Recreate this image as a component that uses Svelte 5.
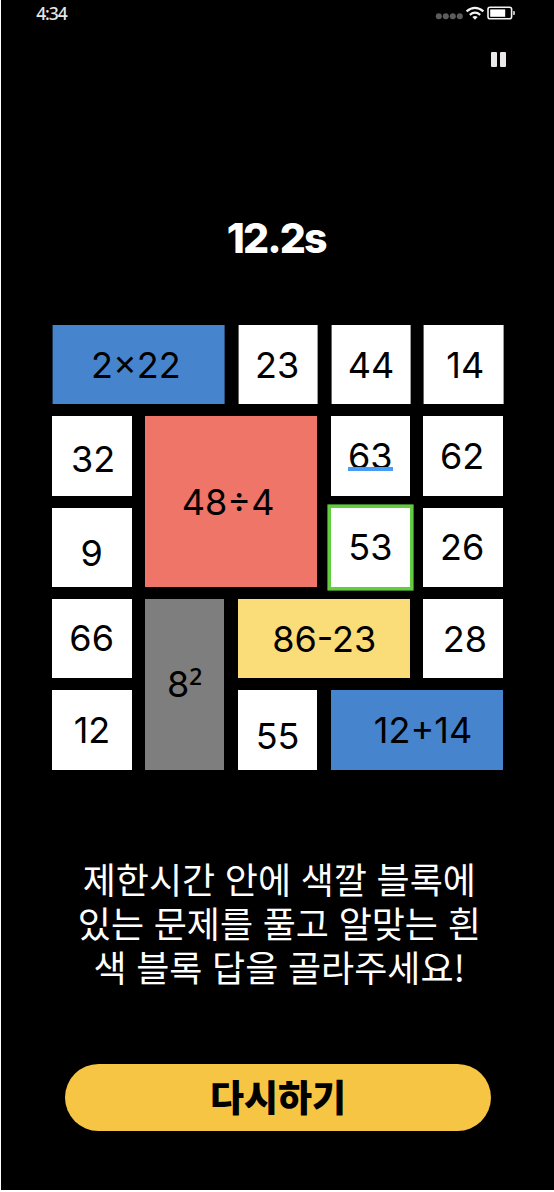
<script>
  const tiles = [
    { text: '2×22', color: 'blue', col: '1 / span 2', row: '1', dx: -3, dy: 0.4 },
    { text: '23', col: '3', row: '1', dx: -1, dy: 0.4 },
    { text: '44', col: '4', row: '1', dx: 0, dy: 0.4 },
    { text: '14', col: '5', row: '1', dx: 1.5, dy: 0.4 },
    { text: '32', col: '1', row: '2', dx: 1.2, dy: 3.3 },
    { text: '48÷4', color: 'red', col: '2 / span 2', row: '2 / span 2', dx: -3, dy: 0 },
    { text: '63', col: '4', row: '2', dx: 0, dy: 0, underlined: true },
    { text: '62', col: '5', row: '2', dx: -1, dy: 0 },
    { text: '9', col: '1', row: '3', dx: -0.2, dy: 5.8 },
    { text: '53', col: '4', row: '3', dx: 0, dy: 0, selected: true },
    { text: '26', col: '5', row: '3', dx: -1, dy: 0.4 },
    { text: '66', col: '1', row: '4', dx: -0.3, dy: -0.8 },
    { text: '8', power: '²', color: 'gray', col: '2', row: '4 / span 2', dx: 0, dy: 0 },
    { text: '86-23', color: 'yellow', col: '3 / span 2', row: '4', dx: 0.3, dy: 0 },
    { text: '28', col: '5', row: '4', dx: 1.7, dy: 0.2 },
    { text: '12', col: '1', row: '5', dx: 0, dy: -0.5 },
    { text: '55', col: '3', row: '5', dx: 0, dy: 5.8 },
    { text: '12+14', color: 'blue', col: '4 / span 2', row: '5', dx: 6.3, dy: 0 }
  ];
  const guide = '제한시간 안에 색깔 블록에\n있는 문제를 풀고 알맞는 흰\n색 블록 답을 골라주세요!';
</script>

<main class="screen">
  <header class="status">
    <span class="time">4:34</span>
    <svg class="indicators" width="82" height="16" viewBox="0 0 82 16">
      <g fill="#5c5c5c">
        <circle cx="3.8" cy="11.3" r="3" />
        <circle cx="10.8" cy="11.3" r="3" />
        <circle cx="17.8" cy="11.3" r="3" />
        <circle cx="24.8" cy="11.3" r="3" />
      </g>
      <g fill="none" stroke="#f4f4f4" stroke-width="2.1">
        <path d="M31.6 6.4Q40 -0.6 48.4 6.4" />
        <path d="M34.8 9.9Q40 5.5 45.2 9.9" />
      </g>
      <path d="M37.3 12.1Q40 10 42.7 12.1L40 14.8Z" fill="#f4f4f4" />
      <rect x="53" y="2.2" width="23.6" height="11.6" rx="2" fill="none" stroke="#f4f4f4" stroke-width="1.6" />
      <rect x="55.2" y="4.4" width="15" height="7.4" fill="#fff" />
      <path d="M78.2 6H79Q79.9 6 79.9 7V9Q79.9 10 79 10H78.2Z" fill="#ddd" />
    </svg>
  </header>

  <div class="toolbar">
    <button class="pause" aria-label="일시정지"><i></i><i></i></button>
  </div>

  <div class="timer">12.2s</div>

  <section class="board">
    {#each tiles as t}
      <div
        class="tile {t.color ?? ''}"
        class:selected={t.selected}
        class:first={t.row === '1'}
        style="grid-column: {t.col}; grid-row: {t.row}"
      >
        <span class:underlined={t.underlined} style="transform: translate({t.dx}px, {t.dy}px)">{t.text}{#if t.power}<span class="power">{t.power}</span>{/if}</span>
      </div>
    {/each}
  </section>

  <p class="guide">{guide}</p>

  <button class="retry"><span>다시하기</span></button>
</main>

<style>
  :global(body) {
    background: #fff;
  }
  .screen {
    box-sizing: border-box;
    width: 553px;
    height: 1189.5px;
    margin-left: 1.3px;
    background: #000;
    display: flex;
    flex-direction: column;
    overflow: hidden;
    font-family: Inter, 'Noto Sans CJK KR', sans-serif;
  }
  .status {
    display: flex;
    justify-content: space-between;
    align-items: flex-start;
    height: 52px;
    padding: 5px 37.6px 0 34.9px;
    box-sizing: border-box;
    flex: none;
  }
  .time {
    font: 500 17.5px/17px 'Noto Sans', sans-serif;
    letter-spacing: -1.1px;
    color: #e6e6e6;
  }
  .toolbar {
    display: flex;
    justify-content: flex-end;
    padding-right: 48px;
    height: 16px;
  }
  .pause {
    display: flex;
    gap: 3px;
    padding: 0;
    border: 0;
    background: none;
  }
  .pause i {
    width: 6.4px;
    height: 15.4px;
    border-radius: 1px;
    background: #ebe9e9;
  }
  .timer {
    margin-top: 145px;
    padding-right: 3px;
    height: 50px;
    line-height: 50px;
    text-align: center;
    color: #fff;
    font-size: 41px;
    font-weight: 780;
    letter-spacing: -1.9px;
  }
  .board {
    margin: 62px 0 0 51px;
    display: grid;
    grid-template-columns: repeat(5, 79.3px);
    grid-template-rows: repeat(5, 79.3px);
    gap: 12.03px 13.5px;
  }
  .tile {
    display: flex;
    align-items: center;
    justify-content: center;
    background: #fff;
    color: #000;
    font-size: 36px;
    line-height: 44px;
  }
  .power {
    display: inline-block;
    font: 38px/20px 'Noto Sans', sans-serif;
    transform: translateY(3.5px);
  }
  .first {
    transform: translateX(0.6px);
  }
  .blue {
    background: #4685cd;
  }
  .red {
    background: #ee7568;
  }
  .gray {
    background: #7e7e7e;
  }
  .yellow {
    background: #fadc79;
  }
  .selected {
    box-shadow: 0 0 0 3.6px #62cd40;
  }
  .underlined {
    display: block;
    height: 44px;
    position: relative;
  }
  .underlined::after {
    content: '';
    position: absolute;
    left: 0;
    right: 0;
    top: 32.6px;
    height: 4.2px;
    background: #479cf8;
  }
  .guide {
    margin: 86px 0 0;
    padding-left: 3px;
    text-align: center;
    color: #fff;
    font: 36px/44px 'Noto Sans CJK KR', sans-serif;
    word-spacing: 1.6px;
    white-space: pre;
  }
  .retry {
    margin: 76.3px 0 0 64px;
    width: 425.4px;
    height: 67.6px;
    flex: none;
    border: 0;
    padding: 0;
    border-radius: 34px;
    background: #f6c544;
    color: #000;
    font: 900 37px/44px 'Noto Sans CJK KR', sans-serif;
  }
  .retry span {
    display: block;
    transform: translateY(-2px);
  }
</style>
